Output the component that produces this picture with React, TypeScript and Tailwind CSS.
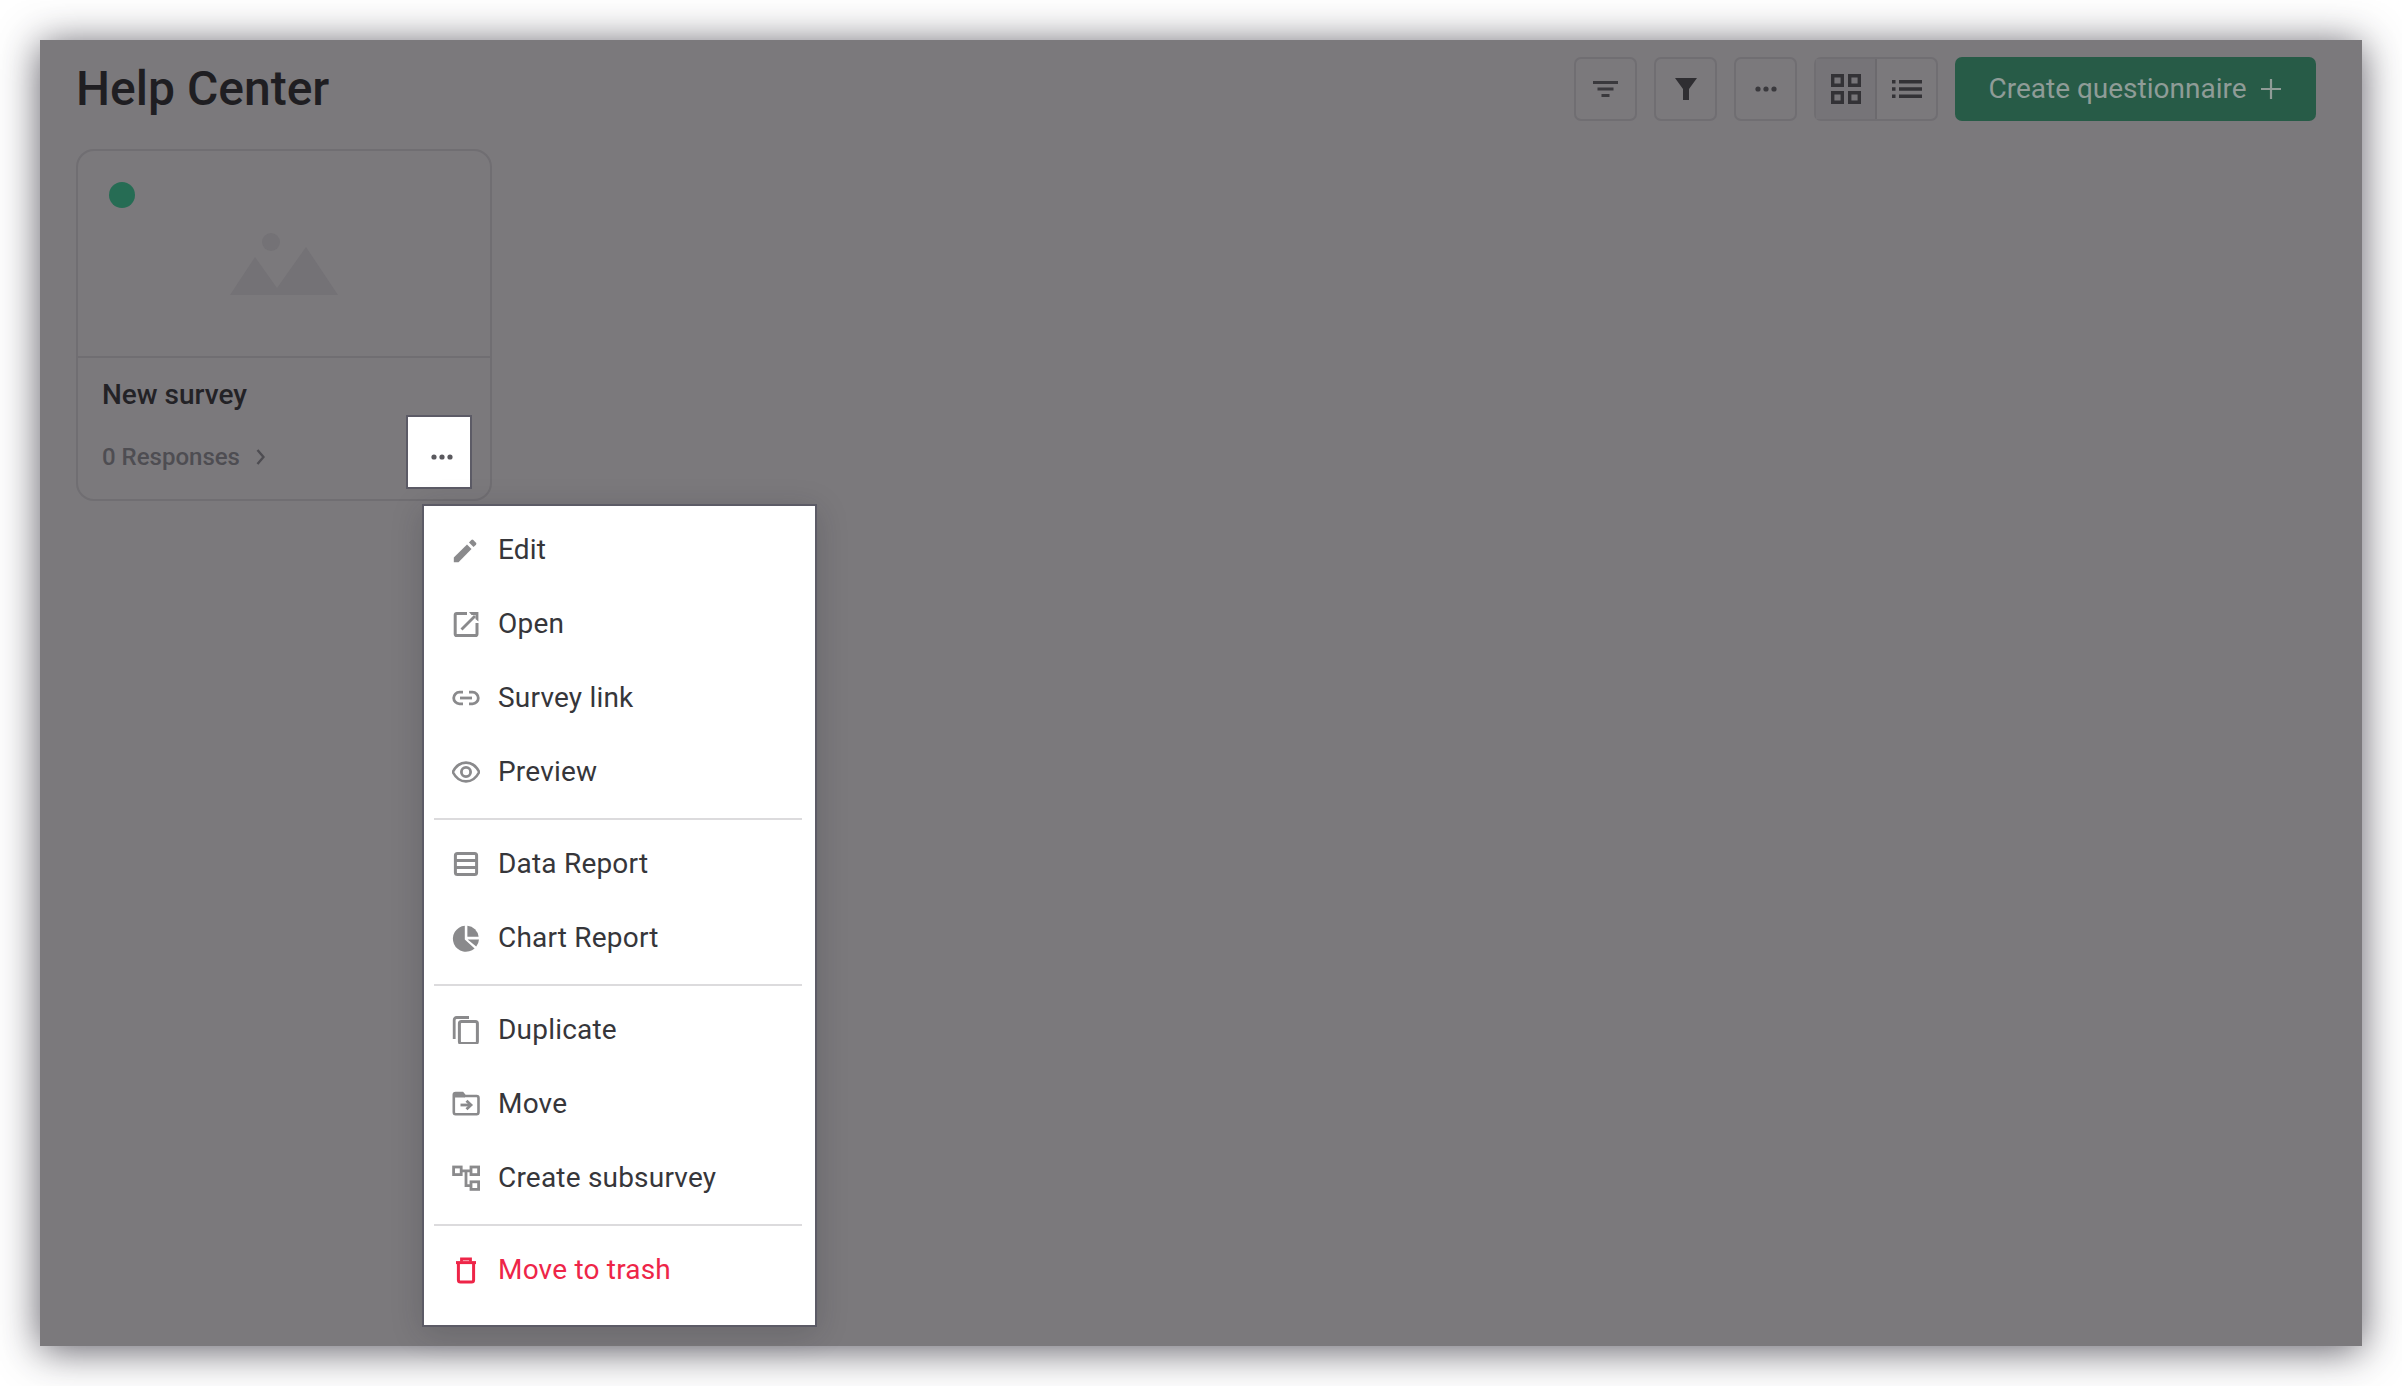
import { ReactNode } from "react";

const GRAY = "#8a8a8c";

const Icon = ({ children, className = "" }: { children: ReactNode; className?: string }) => (
  <svg viewBox="0 0 28 28" width="28" height="28" className={className}>
    {children}
  </svg>
);

const EditIcon = () => (
  <Icon>
    <path d="M1.8 21.5 L1.8 26.2 L6.5 26.2 L19.5 13 L15 8.5 Z" fill={GRAY} />
    <path d="M17 6.5 L19.3 4 Q20.3 3.1 21.3 4 L24 6.7 Q24.9 7.7 24 8.7 L21.5 11 Z" fill={GRAY} />
  </Icon>
);

const OpenIcon = () => (
  <Icon>
    <path d="M15 3.4 H4.7 Q3.2 3.4 3.2 5 V24 Q3.2 25.6 4.7 25.6 H23.4 Q25 25.6 25 24 V13" fill="none" stroke={GRAY} strokeWidth="3" />
    <path d="M9.5 19.5 L23 6" fill="none" stroke={GRAY} strokeWidth="2.8" />
    <path d="M17 2 H26.4 V11.4 L23.5 9 V5 H19.5 Z" fill={GRAY} />
  </Icon>
);

const LinkIcon = () => (
  <Icon>
    <path d="M11 8.2 H7.5 a5.8 5.8 0 0 0 0 11.6 H11 M17 8.2 H20.5 a5.8 5.8 0 0 1 0 11.6 H17" fill="none" stroke={GRAY} strokeWidth="2.8" />
    <path d="M8 14 H20" stroke={GRAY} strokeWidth="2.8" />
  </Icon>
);

const EyeIcon = () => (
  <Icon>
    <path d="M0.8 14 C4 7.5 9 4.6 14 4.6 C19 4.6 24 7.5 27.2 14 C24 20.5 19 23.4 14 23.4 C9 23.4 4 20.5 0.8 14 Z" fill="none" stroke={GRAY} strokeWidth="2.6" />
    <circle cx="14" cy="14" r="4.6" fill="none" stroke={GRAY} strokeWidth="2.8" />
  </Icon>
);

const TableIcon = () => (
  <Icon>
    <rect x="3.4" y="3.4" width="21.2" height="21.2" rx="2" fill="none" stroke={GRAY} strokeWidth="3" />
    <path d="M3 10.5 H25 M3 17.5 H25" stroke={GRAY} strokeWidth="2.8" />
  </Icon>
);

const PieIcon = () => (
  <Icon>
    <path d="M12.8 1.8 V15.6 L22.6 24.4 A13 13 0 1 1 12.8 1.8 Z" fill={GRAY} />
    <path d="M15.4 1.8 A12.4 12.4 0 0 1 26.6 12.8 H15.4 Z" fill={GRAY} />
    <path d="M15.6 15.4 H27 A13 13 0 0 1 24.2 22.4 Z" fill={GRAY} />
  </Icon>
);

const CopyIcon = () => (
  <Icon>
    <path d="M2.2 23 V4 Q2.2 1.5 4.7 1.5 H17" fill="none" stroke={GRAY} strokeWidth="2.8" />
    <rect x="7.4" y="5.6" width="18" height="22" rx="2" fill="none" stroke={GRAY} strokeWidth="3" />
  </Icon>
);

const MoveIcon = () => (
  <Icon>
    <path d="M1.8 4.8 Q1.8 3 3.6 3 H10.5 L13 6 H24.6 Q26.5 6 26.5 8 V22 Q26.5 24.2 24.6 24.2 H3.6 Q1.8 24.2 1.8 22 Z" fill="none" stroke={GRAY} strokeWidth="2.6" />
    <path d="M1.8 3 H11 L13 7.6 H1.8 Z" fill={GRAY} />
    <path d="M8.5 15 H17.5" stroke={GRAY} strokeWidth="2.8" />
    <path d="M14.5 10.8 L19 15 L14.5 19.2" fill="none" stroke={GRAY} strokeWidth="2.8" />
  </Icon>
);

const SubsurveyIcon = () => (
  <Icon>
    <rect x="1.6" y="3" width="7.6" height="7.6" fill="none" stroke={GRAY} strokeWidth="2.8" />
    <rect x="19" y="3" width="7.6" height="7.6" fill="none" stroke={GRAY} strokeWidth="2.8" />
    <rect x="19" y="17.8" width="7.6" height="7.6" fill="none" stroke={GRAY} strokeWidth="2.8" />
    <path d="M9.4 6.8 H19.2 M14 6.8 V21.6 H19.2" fill="none" stroke={GRAY} strokeWidth="2.8" />
  </Icon>
);

const TrashIcon = () => (
  <Icon>
    <path d="M4 6.6 H24" stroke="#ee2548" strokeWidth="3" />
    <path d="M9.5 5.5 V3 H18.5 V5.5" fill="none" stroke="#ee2548" strokeWidth="2.8" />
    <path d="M6.4 7 V24 Q6.4 26 8.4 26 H19.6 Q21.6 26 21.6 24 V7" fill="none" stroke="#ee2548" strokeWidth="3" />
  </Icon>
);

const Dots = ({ color }: { color: string }) => (
  <svg viewBox="0 0 22 6" width="22" height="6">
    <circle cx="3" cy="3" r="2.6" fill={color} />
    <circle cx="11" cy="3" r="2.6" fill={color} />
    <circle cx="19" cy="3" r="2.6" fill={color} />
  </svg>
);

const ToolButton = ({ children }: { children: ReactNode }) => (
  <button className="w-[63px] h-[64px] flex items-center justify-center rounded-[7px] border-2 border-[#706e72]">
    {children}
  </button>
);

const MenuItem = ({ icon, label, danger }: { icon: ReactNode; label: string; danger?: boolean }) => (
  <div className={`flex items-center h-[74px] pl-[28px] pb-[3px] ${danger ? "text-[#ee2548]" : "text-[#36363a]"}`}>
    <span className="w-[46px] flex shrink-0">{icon}</span>
    {label}
  </div>
);

const Divider = () => <div className="h-[2px] ml-[10px] mr-[13px] my-[8px] bg-[#dcdbdd]" />;

export default function App() {
  return (
    <div className="w-[2402px] h-[1386px] p-10 bg-white overflow-hidden font-['Roboto',sans-serif]">
      <div className="relative w-[2322px] h-[1306px] bg-[#7b797c] shadow-[0_4px_38px_rgba(30,28,40,0.72)]">
        {/* Top bar */}
        <div className="flex items-center justify-between pl-[36px] pr-[46px] pt-[17px]">
          <h1 className="text-[48px] leading-[64px] font-medium text-[#1f1e22]">Help Center</h1>
          <div className="flex items-center gap-[17px]">
            <ToolButton>
              <svg viewBox="0 0 25 16" width="25" height="16">
                <path d="M0 0 H25 V3 H0 Z M4.5 6.5 H20.5 V9.5 H4.5 Z M8.5 13 H16.5 V16 H8.5 Z" fill="#3a393d" />
              </svg>
            </ToolButton>
            <ToolButton>
              <svg viewBox="0 0 24 24" width="24" height="24">
                <path d="M1 1 H23 L15 12 V23 H9 V12 Z" fill="#2f2e32" />
              </svg>
            </ToolButton>
            <ToolButton>
              <Dots color="#3a393d" />
            </ToolButton>
            <div className="flex h-[64px] rounded-[7px] border-2 border-[#706e72]">
              <div className="w-[61px] flex items-center justify-center border-r-2 border-[#6c6a6e] bg-[#767478]">
                <svg viewBox="0 0 30 30" width="30" height="30">
                  <path fill="none" stroke="#333236" strokeWidth="3.4" d="M1.7 1.7 H11.3 V11.3 H1.7 Z M18.7 1.7 H28.3 V11.3 H18.7 Z M1.7 18.7 H11.3 V28.3 H1.7 Z M18.7 18.7 H28.3 V28.3 H18.7 Z" />
                </svg>
              </div>
              <div className="w-[59px] flex items-center justify-center">
                <svg viewBox="0 0 30 18" width="30" height="18">
                  <path fill="#333236" d="M0 0 H3.5 V3.6 H0 Z M7 0 H30 V3.6 H7 Z M0 7.2 H3.5 V10.8 H0 Z M7 7.2 H30 V10.8 H7 Z M0 14.4 H3.5 V18 H0 Z M7 14.4 H30 V18 H7 Z" />
                </svg>
              </div>
            </div>
            <button className="w-[361px] h-[64px] flex items-center justify-center gap-[14px] rounded-[7px] bg-[#275b47] text-[#8f9c97] text-[28px] pr-[2px]">
              Create questionnaire
              <svg viewBox="0 0 20 20" width="20" height="20">
                <path d="M10 0 V20 M0 10 H20" stroke="#8f9c97" strokeWidth="2.2" />
              </svg>
            </button>
          </div>
        </div>

        {/* Survey card */}
        <div className="relative mt-[28px] ml-[36px] w-[416px] h-[352px] rounded-[18px] border-2 border-[#706e72]">
          <div className="relative h-[207px] flex items-center justify-center border-b-2 border-[#706e72]">
            <span className="absolute left-[31px] top-[31px] w-[26px] h-[26px] rounded-full bg-[#266c54]" />
            <svg viewBox="0 0 108 62" width="108" height="62" className="mt-[20px]">
              <circle cx="41" cy="9" r="9" fill="#747276" />
              <path d="M0 62 L25 24 L47 55 L76 14 L108 62 Z" fill="#747276" />
            </svg>
          </div>
          <div className="pl-[24px] pt-[17px]">
            <div className="text-[28px] leading-[40px] font-medium text-[#232226]">New survey</div>
            <div className="flex items-center mt-[22px] text-[#4e4d52] text-[24px] leading-[40px] font-medium">
              0 Responses
              <svg viewBox="0 0 8 16" width="9" height="16" className="ml-[16px]">
                <path d="M1 1 L7 8 L1 15" fill="none" stroke="#4e4d52" strokeWidth="2.4" />
              </svg>
            </div>
          </div>
          {/* button lifted above the overlay */}
          <div className="absolute left-[328px] top-[264px] w-[66px] h-[74px] flex items-center justify-center pl-[6px] pt-[10px] bg-white border-2 border-[#5c5b66]">
            <Dots color="#5a595e" />
          </div>
        </div>

        {/* Context menu */}
        <div className="absolute left-[382px] top-[464px] w-[395px] h-[823px] pt-[8px] bg-white border-2 border-[#5c5b66] shadow-[0_6px_30px_rgba(30,28,40,0.2)] text-[28px] tracking-[0.2px]">
          <MenuItem icon={<EditIcon />} label="Edit" />
          <MenuItem icon={<OpenIcon />} label="Open" />
          <MenuItem icon={<LinkIcon />} label="Survey link" />
          <MenuItem icon={<EyeIcon />} label="Preview" />
          <Divider />
          <MenuItem icon={<TableIcon />} label="Data Report" />
          <MenuItem icon={<PieIcon />} label="Chart Report" />
          <Divider />
          <MenuItem icon={<CopyIcon />} label="Duplicate" />
          <MenuItem icon={<MoveIcon />} label="Move" />
          <MenuItem icon={<SubsurveyIcon />} label="Create subsurvey" />
          <Divider />
          <MenuItem icon={<TrashIcon />} label="Move to trash" danger />
        </div>
      </div>
    </div>
  );
}
